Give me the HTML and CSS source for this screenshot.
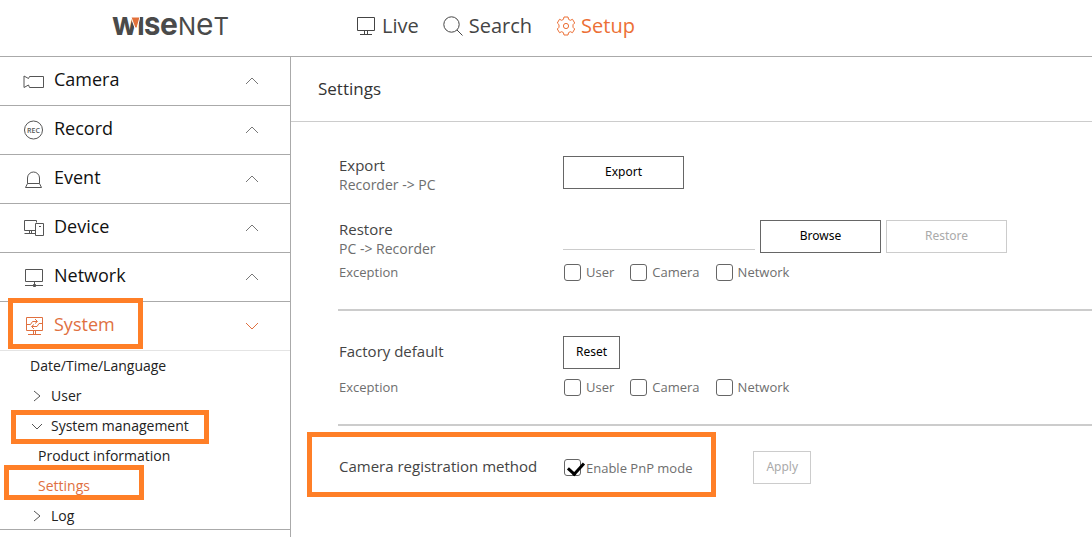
FILE: index.html
```html
<!DOCTYPE html>
<html lang="en">
<head>
<meta charset="utf-8">
<title>Wisenet - Settings</title>
<link rel="stylesheet" href="styles.css">
</head>
<body>
<header class="topbar">
  <a class="logo" href="#"><span class="logo-bold">W<svg class="logo-wedge" viewBox="0 0 9 12" aria-hidden="true"><path d="M0 0H9L6 11H4Z"/></svg>IS<span class="logo-e">e</span></span><span class="logo-thin">N<span class="logo-e">e</span>T</span></a>
  <nav class="topnav">
    <a href="#"><svg viewBox="0 0 20 20"><path d="M1.500 1.500H18.500V14.500H1.500ZM8.500 14.500V18.500M11.500 14.500V18.500M4 18.500H16"/></svg>Live</a>
    <a href="#"><svg viewBox="0 0 20 20"><circle cx="8.500" cy="8.500" r="7.700"/><path d="M14 14L19.500 19.500"/></svg>Search</a>
    <a class="active" href="#"><svg viewBox="0 0 20 20"><circle cx="10" cy="10" r="2.600"/><path d="M8 1H12L12.600 3.400L14.300 4.300L16.500 3.300L18.700 7L17 8.700V11.300L18.700 13L16.500 16.700L14.300 15.700L12.600 16.600L12 19H8L7.400 16.600L5.700 15.700L3.500 16.700L1.300 13L3 11.300V8.700L1.300 7L3.500 3.300L5.700 4.300L7.400 3.400Z"/></svg>Setup</a>
  </nav>
</header>
<div class="layout">
  <nav class="sidebar">
    <a class="menu" href="#"><svg class="menu-icon" viewBox="0 0 22 22"><path d="M6.500 6.500H20.500V17.500H6.500L5.500 15L1 17.500V6L5.500 8.500Z"/></svg><span>Camera</span><svg class="chevron" viewBox="0 0 14 8"><path d="M1 7L7 1L13 7"/></svg></a>
    <a class="menu" href="#"><svg class="menu-icon" viewBox="0 0 22 22"><circle cx="10.500" cy="11" r="9"/><text x="10.500" y="13.500" text-anchor="middle">REC</text></svg><span>Record</span><svg class="chevron" viewBox="0 0 14 8"><path d="M1 7L7 1L13 7"/></svg></a>
    <a class="menu" href="#"><svg class="menu-icon" viewBox="0 0 22 22"><path d="M4.500 15.500V10A6 6 0 0 1 16.500 10V15.500M4.500 15.500H16.500L18.500 19.500H2.500Z"/></svg><span>Event</span><svg class="chevron" viewBox="0 0 14 8"><path d="M1 7L7 1L13 7"/></svg></a>
    <a class="menu" href="#"><svg class="menu-icon" viewBox="0 0 22 22"><path d="M13.500 5.500V3.500H1.500V13.500H12.500M1.500 16.500H12.500M6.500 13.500V16.500M8.500 13.500V16.500M12.500 6.500H20.500V18.500H12.500ZM16 9.500H18"/></svg><span>Device</span><svg class="chevron" viewBox="0 0 14 8"><path d="M1 7L7 1L13 7"/></svg></a>
    <a class="menu" href="#"><svg class="menu-icon" viewBox="0 0 22 22"><path d="M2.500 3.500H19.500V15.500H2.500ZM11.500 15.500V19M2 19.500H20"/><path class="solid" d="M10.500 18.500H12.500V20.500H10.500Z"/></svg><span>Network</span><svg class="chevron" viewBox="0 0 14 8"><path d="M1 7L7 1L13 7"/></svg></a>
    <a class="menu open" href="#"><svg class="menu-icon" viewBox="0 0 22 22"><path d="M3.500 2.500H19.500V15.500H3.500ZM10.500 15.500V19.500M12.500 15.500V19.500M5 19.500H18M3.500 9.500H7.500L9.500 6.500H14M12 4L14.500 6.500L12 8.500M19.500 8.500H16L14 11.500H9M11 9.500L8.500 11.500L11 14"/></svg><span>System</span><svg class="chevron" viewBox="0 0 14 8"><path d="M1 1L7 7L13 1"/></svg><i class="mark mark-system"></i></a>
    <ul class="submenu">
      <li><a class="plain" href="#">Date/Time/Language</a></li>
      <li><a href="#"><svg class="twisty" viewBox="0 0 12 12"><path d="M3 1L9 6L3 11"/></svg>User</a></li>
      <li><a href="#"><svg class="twisty" viewBox="0 0 12 12"><path d="M1 4L6 9L11 4"/></svg>System management</a><i class="mark mark-management"></i></li>
      <li><a class="leaf" href="#">Product information</a></li>
      <li><a class="leaf active" href="#">Settings</a><i class="mark mark-settings"></i></li>
      <li><a href="#"><svg class="twisty" viewBox="0 0 12 12"><path d="M3 1L9 6L3 11"/></svg>Log</a></li>
    </ul>
  </nav>
  <main class="content">
    <h1>Settings</h1>
    <div class="groups">
      <section class="group first">
        <div class="row">
          <div class="heading"><h2>Export</h2><p class="route">Recorder -&gt; PC</p></div>
          <div class="controls"><button class="wide">Export</button></div>
        </div>
        <div class="row spaced">
          <div class="heading"><h2><label for="file">Restore</label></h2><p class="route">PC -&gt; Recorder</p></div>
          <div class="controls"><input class="file" id="file" type="text"><button class="wide">Browse</button><button class="wide" disabled>Restore</button></div>
        </div>
        <div class="row options">
          <p>Exception</p>
          <div class="checks"><label><input type="checkbox">User</label><label><input type="checkbox">Camera</label><label><input type="checkbox">Network</label></div>
        </div>
      </section>
      <section class="group">
        <div class="row middle">
          <h2>Factory default</h2>
          <div class="controls"><button>Reset</button></div>
        </div>
        <div class="row options after-button">
          <p>Exception</p>
          <div class="checks"><label><input type="checkbox">User</label><label><input type="checkbox">Camera</label><label><input type="checkbox">Network</label></div>
        </div>
      </section>
      <section class="group">
        <div class="row middle">
          <h2>Camera registration method</h2>
          <div class="registration"><label><input type="checkbox" checked>Enable PnP mode</label><button disabled>Apply</button></div>
          <i class="mark mark-registration"></i>
        </div>
      </section>
    </div>
  </main>
</div>
</body>
</html>
```
FILE: styles.css
```css
* { box-sizing: border-box; }
body { margin: 0; background: #fff; color: #222; font-family: "Open Sans", "Noto Sans", sans-serif; }
a { color: inherit; text-decoration: none; }
svg { fill: none; stroke: currentColor; stroke-width: 1; flex: none; }
h1, h2, p, ul { margin: 0; padding: 0; font-weight: 400; }

.topbar { display: flex; align-items: center; height: 57px; padding: 0 0 4px 112px; border-bottom: 1px solid #aaa; }
.logo { display: flex; align-items: baseline; width: 244px; padding-top: 2px; font-family: Inter, sans-serif; font-size: 24px; line-height: 36px; color: #4a4a4a; }
.logo-bold { position: relative; font-weight: 800; }
.logo-thin { font-weight: 400; }
.logo-e { font-size: 30px; line-height: 24px; }
.logo-bold .logo-e { font-weight: 700; }
.logo-wedge { position: absolute; left: 19px; top: 8px; width: 9px; height: 12px; fill: #e2703a; stroke: #fff; }
.topnav { display: flex; gap: 24px; font-size: 20px; line-height: 28px; color: #444; }
.topnav a { display: flex; align-items: center; gap: 6px; }
.topnav svg { width: 20px; height: 20px; }
.topnav .active { gap: 5px; color: #ec6f35; }

.layout { display: flex; min-height: calc(100vh - 57px); }
.sidebar { flex: none; width: 291px; border-right: 1px solid #aaa; }
.menu { position: relative; display: flex; align-items: center; height: 49px; padding: 0 31px 0 23px; border-bottom: 1px solid #aaa; font-size: 18px; line-height: 24px; color: #111; }
.menu span { flex: 1; padding: 0 0 4px 9px; }
.menu-icon { width: 22px; height: 22px; color: #555; }
.menu-icon text { font-size: 7px; font-weight: 600; fill: currentColor; stroke: none; }
.solid { fill: currentColor; }
.chevron { width: 14px; height: 8px; color: #777; }
.menu.open, .menu.open svg { color: #e0703f; }
.menu.open { border-color: #e4e4e4; }
.submenu { display: flex; flex-direction: column; gap: 2px; border-bottom: 1px solid #aaa; list-style: none; font-size: 14px; line-height: 28px; color: #222; }
.submenu li { position: relative; }
.submenu a { display: flex; align-items: center; gap: 8px; height: 28px; padding: 2px 0 0 31px; }
.submenu .plain { padding-left: 30px; }
.submenu .leaf { padding-left: 38px; }
.submenu .active { color: #e0703f; }
.twisty { width: 12px; height: 12px; color: #555; }

.mark { position: absolute; border: 5px solid #ff7f27; pointer-events: none; }
.mark-system { left: 8px; top: -4px; width: 135px; height: 51px; }
.mark-management { left: 11px; top: -1px; width: 198px; height: 34px; }
.mark-settings { left: 4px; top: -6px; width: 140px; height: 35px; }
.mark-registration { left: -31px; top: -19px; width: 409px; height: 65px; }

.content { flex: 1; min-width: 0; }
h1 { padding: 20px 27px; border-bottom: 1px solid #ccc; font-size: 17px; line-height: 24px; color: #333; }
.groups { padding-left: 47px; }
.group { padding: 25px 0; }
.group.first { padding-top: 34px; }
.group + .group { border-top: 2px solid #ccc; }
.row { position: relative; display: grid; grid-template-columns: 225px 1fr; }
.spaced { margin-top: 24px; }
.middle { align-items: center; }
.options { align-items: center; height: 24px; }
.after-button { margin-top: 6px; }
.heading { height: 40px; }
h2 { padding-left: 1px; font-size: 15px; line-height: 18px; color: #444; }
.middle h2 { padding-bottom: 4px; }
p { padding-left: 1px; font-size: 13px; line-height: 20px; color: #6e6e6e; }
.route { font-size: 14px; line-height: 22px; }
.controls { display: flex; align-items: flex-start; gap: 5px; }
button { height: 33px; padding: 0 12px 1px; border: 1px solid #666; background: #fff; color: #000; font: 12px/20px "Noto Sans", sans-serif; }
.wide { width: 121px; }
button:disabled { border-color: #ccc; color: #aaa; }
.file { width: 192px; height: 30px; border: 0; border-bottom: 1px solid #ccc; }
.checks, .registration { display: flex; gap: 16px; padding-left: 1px; }
.registration { align-items: center; gap: 61px; }
.checks label, .registration label { display: flex; align-items: center; gap: 5px; font-size: 13px; line-height: 20px; color: #6e6e6e; }
input[type="checkbox"] { position: relative; appearance: none; width: 17px; height: 17px; margin: 0; border: 1px solid #666; border-radius: 3px; background: #fff; }
input[type="checkbox"]:checked::after { content: ""; position: absolute; left: 6px; top: -1px; width: 7px; height: 13px; border: solid #000; border-width: 0 3px 3px 0; transform: rotate(42deg); }
```
